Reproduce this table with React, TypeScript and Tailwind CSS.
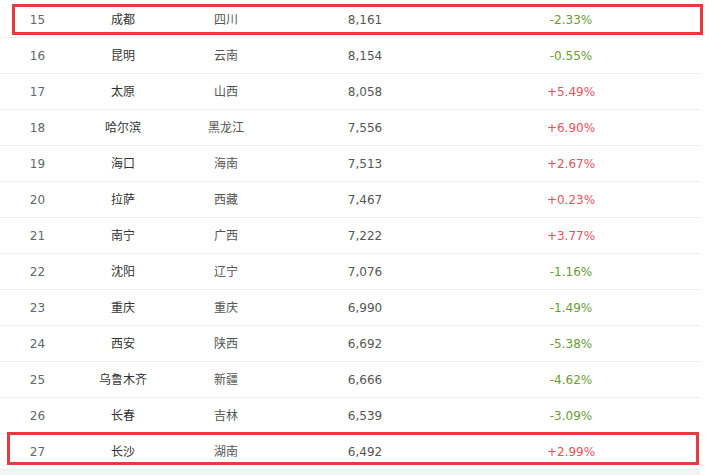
const rows = [
  { rank: 15, city: "成都", prov: "四川", value: "8,161", change: "-2.33%" },
  { rank: 16, city: "昆明", prov: "云南", value: "8,154", change: "-0.55%" },
  { rank: 17, city: "太原", prov: "山西", value: "8,058", change: "+5.49%" },
  { rank: 18, city: "哈尔滨", prov: "黑龙江", value: "7,556", change: "+6.90%" },
  { rank: 19, city: "海口", prov: "海南", value: "7,513", change: "+2.67%" },
  { rank: 20, city: "拉萨", prov: "西藏", value: "7,467", change: "+0.23%" },
  { rank: 21, city: "南宁", prov: "广西", value: "7,222", change: "+3.77%" },
  { rank: 22, city: "沈阳", prov: "辽宁", value: "7,076", change: "-1.16%" },
  { rank: 23, city: "重庆", prov: "重庆", value: "6,990", change: "-1.49%" },
  { rank: 24, city: "西安", prov: "陕西", value: "6,692", change: "-5.38%" },
  { rank: 25, city: "乌鲁木齐", prov: "新疆", value: "6,666", change: "-4.62%" },
  { rank: 26, city: "长春", prov: "吉林", value: "6,539", change: "-3.09%" },
  { rank: 27, city: "长沙", prov: "湖南", value: "6,492", change: "+2.99%" },
];

export default function App() {
  return (
    <div
      className="relative w-[719px] h-[475px] overflow-hidden bg-white text-[12px] pt-[2px]"
      style={{ fontFamily: "'DejaVu Sans', 'Noto Sans CJK SC', sans-serif" }}
    >
      <div className="w-[700px]">
        {rows.map((r) => (
          <div
            key={r.rank}
            className="grid grid-cols-[75px_96px_110px_168px_244px] h-[36px] items-center border-b border-[#efefef] text-center"
          >
            <span className="text-[#666]">{r.rank}</span>
            <span className="text-[#333]">{r.city}</span>
            <span className="text-[#555]">{r.prov}</span>
            <span className="text-[#555]">{r.value}</span>
            <span className={r.change.startsWith("+") ? "text-[#e2535b]" : "text-[#6a9b34]"}>
              {r.change}
            </span>
          </div>
        ))}
        <div className="h-[10px] bg-[#f3f3f3]" />
      </div>

      {/* highlight boxes */}
      <div className="absolute left-[12px] top-[4px] w-[691px] h-[31px] border-[3px] border-[#e53a3f]" />
      <div className="absolute left-[7px] top-[432px] w-[692px] h-[33px] border-[3px] border-[#e53a3f]" />
    </div>
  );
}
